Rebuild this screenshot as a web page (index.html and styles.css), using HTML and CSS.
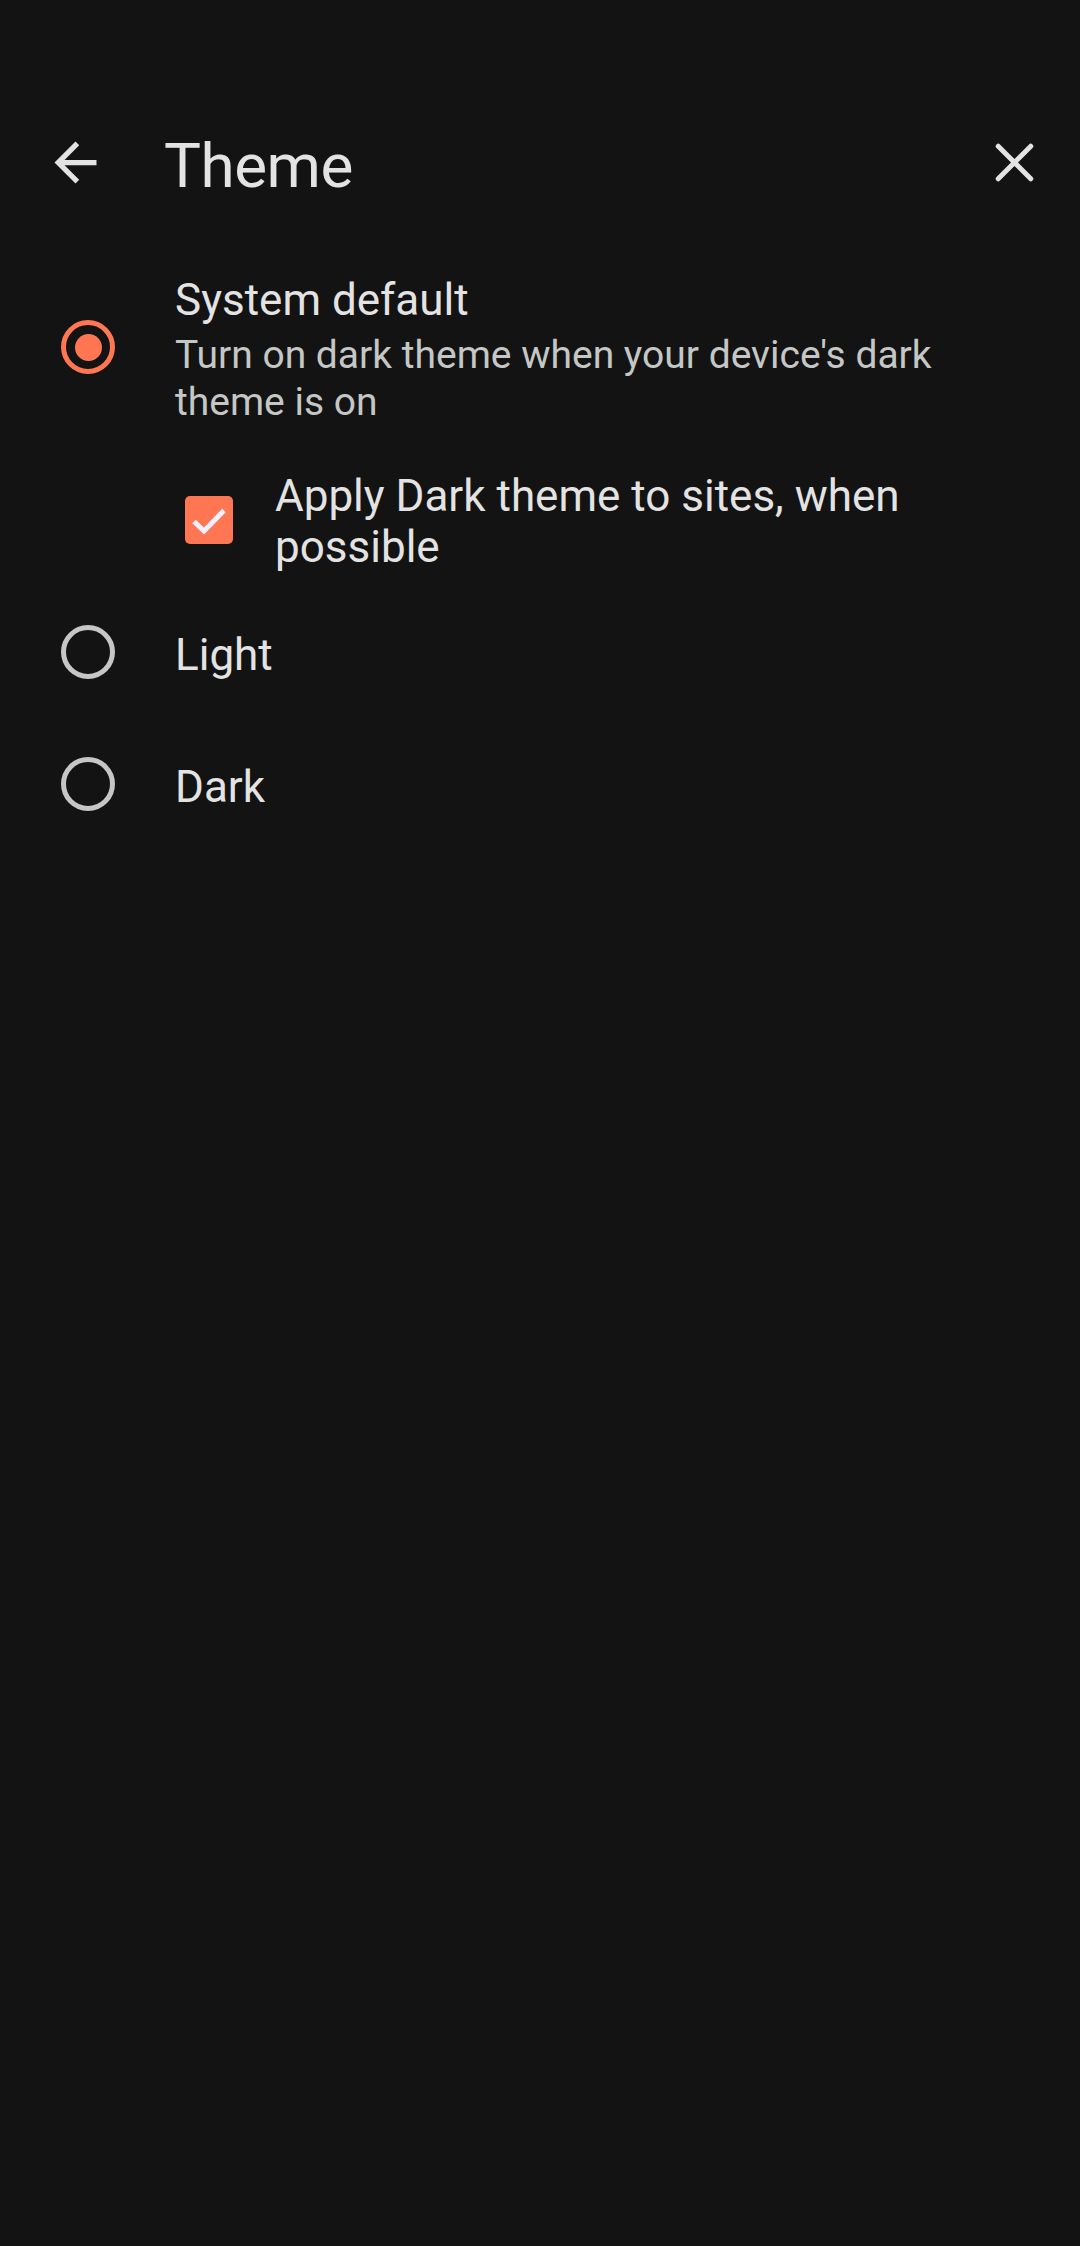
FILE: index.html
```html
<!DOCTYPE html>
<html lang="en">
<head>
<meta charset="utf-8">
<title>Theme</title>
<link rel="stylesheet" href="styles.css">
</head>
<body>
<div class="screen">
  <header class="toolbar">
    <button class="icon-btn back" aria-label="Back">
      <svg viewBox="0 0 24 24" width="63" height="63"><path d="M20 11H7.83l5.59-5.59L12 4l-8 8 8 8 1.41-1.41L7.83 13H20v-2z" fill="#e3e3e3"/></svg>
    </button>
    <h1 class="title">Theme</h1>
    <button class="icon-btn close" aria-label="Close">
      <svg viewBox="0 0 24 24" width="63" height="63"><path d="M5.8 5.8L18.2 18.2M18.2 5.8L5.8 18.2" stroke="#e3e3e3" stroke-width="1.9" stroke-linecap="round" fill="none"/></svg>
    </button>
  </header>

  <main class="list">
    <div class="row row-system">
      <span class="radio checked"><span class="dot"></span></span>
      <div class="text">
        <div class="label">System default</div>
        <div class="summary">Turn on dark theme when your device's dark theme is on</div>
      </div>
    </div>

    <div class="row row-check">
      <span class="checkbox">
        <svg viewBox="0 0 48 48" width="48" height="48"><path d="M9 25.5L19 35L39 14.5" stroke="#f3f1ff" stroke-width="5" fill="none"/></svg>
      </span>
      <div class="check-label">Apply Dark theme to sites, when possible</div>
    </div>

    <div class="row row-simple row-light">
      <span class="radio"></span>
      <div class="label">Light</div>
    </div>

    <div class="row row-simple">
      <span class="radio"></span>
      <div class="label">Dark</div>
    </div>
  </main>
</div>
</body>
</html>
```

FILE: styles.css
```css
html, body {
  margin: 0;
  padding: 0;
  background: #131313;
}

body {
  font-family: Roboto, "Noto Sans", "Liberation Sans", sans-serif;
  color: #e3e3e3;
  width: 1080px;
  min-height: 2246px;
}

.screen {
  padding-top: 89px;
}

.toolbar {
  height: 147px;
  display: flex;
  align-items: center;
  padding-left: 44px;
  padding-right: 34px;
}

.icon-btn {
  width: 63px;
  height: 63px;
  padding: 0;
  margin: 0;
  border: 0;
  background: none;
  display: flex;
  align-items: center;
  justify-content: center;
  flex: none;
}

.title {
  flex: 1;
  margin: 0 0 0 57px;
  padding-top: 6px;
  font-size: 62px;
  font-weight: 400;
  line-height: 70px;
  color: #e3e3e3;
  letter-spacing: -0.5px;
}

.list {
  display: flex;
  flex-direction: column;
}

.row {
  display: flex;
  padding-left: 61px;
  box-sizing: border-box;
}

.radio {
  width: 54px;
  height: 54px;
  box-sizing: border-box;
  border: 5.5px solid #c4c7c5;
  border-radius: 50%;
  flex: none;
  display: flex;
  align-items: center;
  justify-content: center;
}

.radio.checked {
  border-color: #ff7752;
}

.radio .dot {
  width: 27px;
  height: 27px;
  border-radius: 50%;
  background: #ff7752;
}

.label {
  font-size: 44px;
  line-height: 52px;
  color: #e3e3e3;
}

.row-system {
  align-items: flex-start;
  padding-top: 40.5px;
}

.row-system .radio {
  margin-top: 43.5px;
}

.text {
  margin-left: 60px;
  width: 860px;
}

.row-system .label {
  line-height: 47px;
}

.summary {
  margin-top: 8px;
  font-size: 39px;
  line-height: 47px;
  color: #c4c7c5;
}

.row-check {
  margin-top: 45px;
  height: 102px;
  padding-left: 185px;
  align-items: center;
}

.checkbox {
  width: 48px;
  height: 48px;
  border-radius: 5px;
  background: #ff7752;
  flex: none;
  margin-bottom: 3px;
  display: flex;
}

.check-label {
  margin-left: 42px;
  width: 760px;
  font-size: 44px;
  line-height: 51px;
  color: #e3e3e3;
}

.row-simple {
  height: 132px;
  align-items: center;
}

.row-light {
  margin-top: 16.5px;
}

.row-simple .radio {
  margin-bottom: 6px;
}

.row-simple .label {
  margin-left: 60px;
}
```
